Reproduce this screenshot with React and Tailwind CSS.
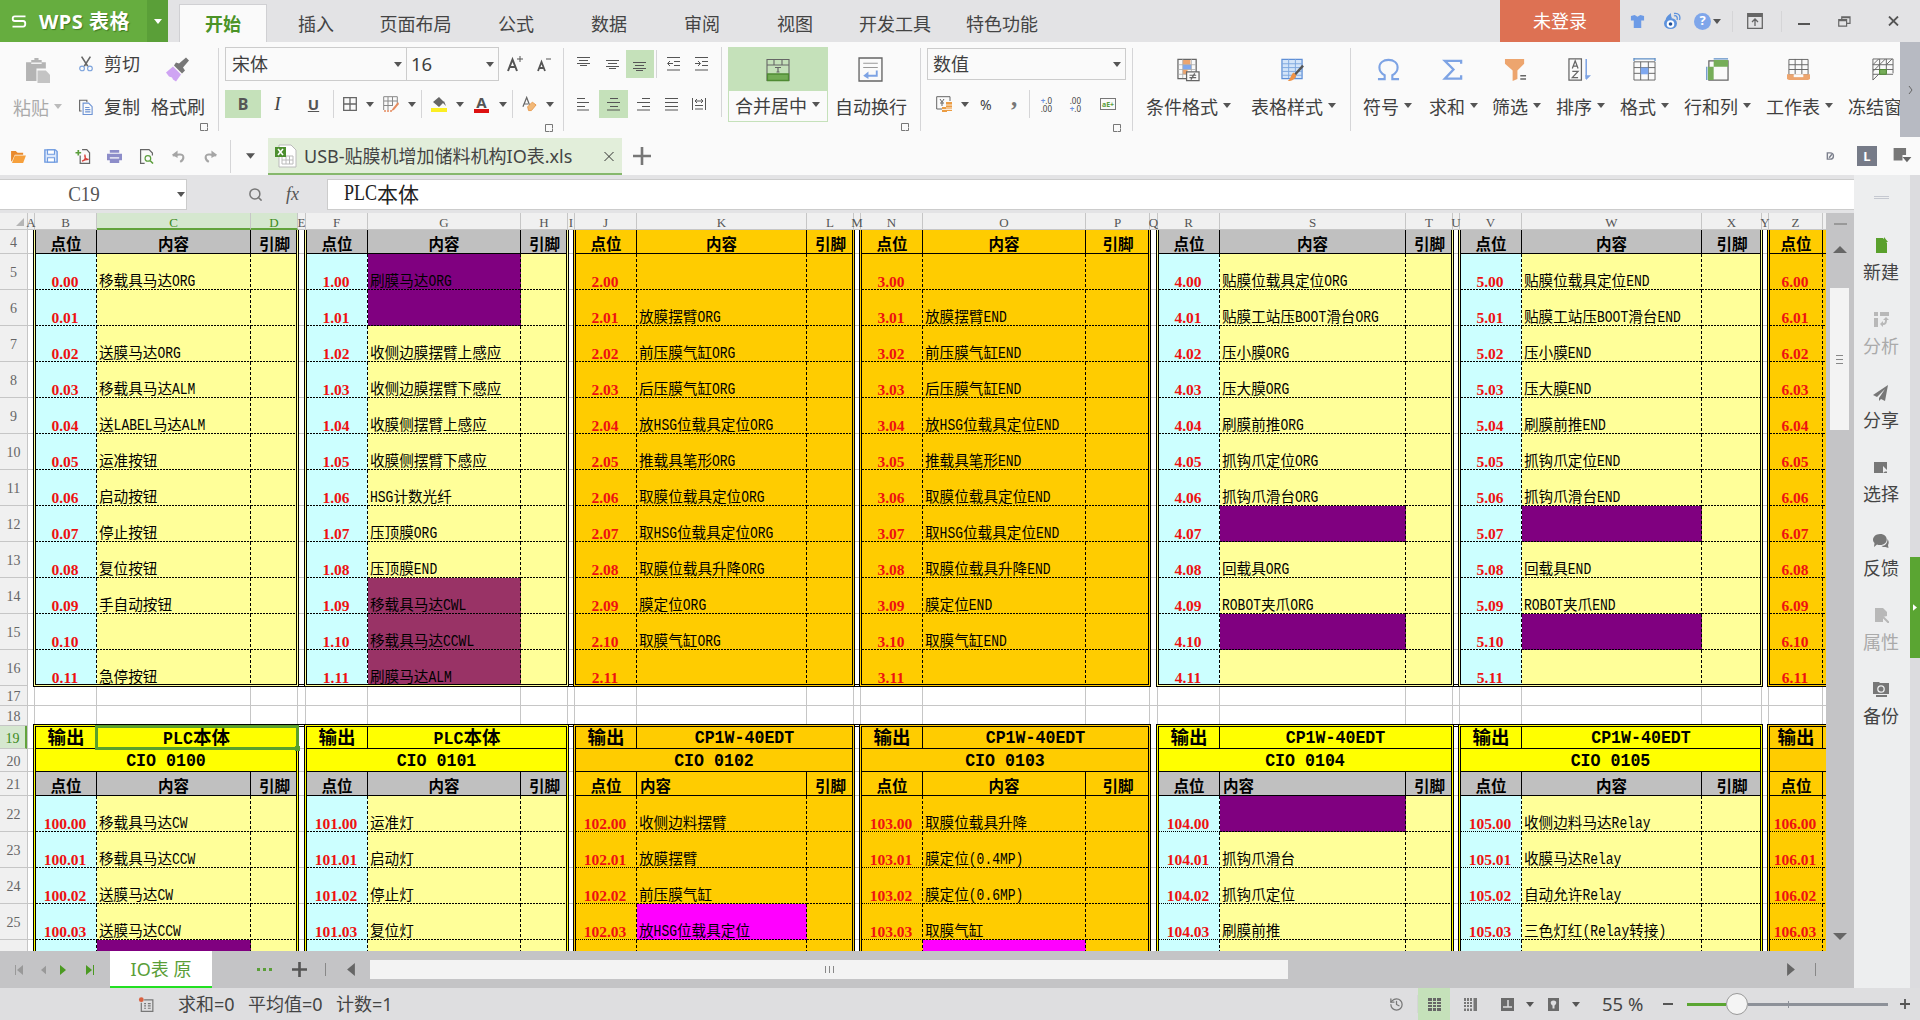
import React from "react";
import { History, Search } from "lucide-react";

const UI = "font-['Noto_Sans','Noto_Sans_CJK_SC',sans-serif]";
const SONG = "font-['Liberation_Serif','Noto_Sans_CJK_SC',serif]";

/* ---------- sheet data ---------- */

const DASH =
  "bg-no-repeat [background-image:repeating-linear-gradient(90deg,#000_0_2px,transparent_2px_3px),repeating-linear-gradient(180deg,#000_0_3px,transparent_3px_5px)] [background-size:100%_1px,1px_100%] [background-position:left_bottom,right_top]";
const DASH_BOTTOM =
  "bg-no-repeat [background-image:repeating-linear-gradient(90deg,#000_0_2px,transparent_2px_3px)] [background-size:100%_1px] [background-position:left_bottom]";
const DASH_RIGHT =
  "bg-no-repeat [background-image:repeating-linear-gradient(180deg,#000_0_3px,transparent_3px_5px)] [background-size:1px_100%] [background-position:right_top]";
const HAIR =
  "bg-no-repeat [background-image:repeating-linear-gradient(90deg,#000_0_1px,transparent_1px_2px),repeating-linear-gradient(180deg,#000_0_3px,transparent_3px_5px)] [background-size:100%_1px,1px_100%] [background-position:left_bottom,right_top]";

const P = "bg-[#800080]";
const M = "bg-[#993366]";
const F = "bg-[#ff00ff]";

const YELLOW = { head: "bg-[#c0c0c0]", title: "bg-[#ffff00]", point: "bg-[#ccffff]", body: "bg-[#ffff99]" };
const ORANGE = { head: "bg-[#ffcc00]", title: "bg-[#ffcc00]", point: "bg-[#ffcc00]", body: "bg-[#ffcc00]" };

const TABLES = [
  {
    w: "w-[266px]", c1: "w-[61px]", c2: "w-[154px]", theme: YELLOW, gap: "w-[5px]", joined: true,
    device: "PLC本体", cio: "CIO 0100",
    input: ["移载具马达ORG", "", "送膜马达ORG", "移载具马达ALM", "送LABEL马达ALM", "运准按钮", "启动按钮", "停止按钮", "复位按钮", "手自动按钮", "", "急停按钮"],
    output: ["移载具马达CW", "移载具马达CCW", "送膜马达CW", "送膜马达CCW", ""],
    inFill: {}, outFill: { 4: P }, selected: true,
  },
  {
    w: "w-[265px]", c1: "w-[61px]", c2: "w-[153px]", theme: YELLOW, gap: "w-[4px]", joined: true,
    device: "PLC本体", cio: "CIO 0101",
    input: ["刷膜马达ORG", "", "收侧边膜摆臂上感应", "收侧边膜摆臂下感应", "收膜侧摆臂上感应", "收膜侧摆臂下感应", "HSG计数光纤", "压顶膜ORG", "压顶膜END", "移载具马达CWL", "移载具马达CCWL", "刷膜马达ALM"],
    output: ["运准灯", "启动灯", "停止灯", "复位灯", ""],
    inFill: { 0: P, 1: P, 9: M, 10: M, 11: M }, outFill: {},
  },
  {
    w: "w-[282px]", c1: "w-[61px]", c2: "w-[170px]", theme: ORANGE, gap: "w-[4px]", joined: true,
    device: "CP1W-40EDT", cio: "CIO 0102", leftHead: true, hair: true,
    input: ["", "放膜摆臂ORG", "前压膜气缸ORG", "后压膜气缸ORG", "放HSG位载具定位ORG", "推载具笔形ORG", "取膜位载具定位ORG", "取HSG位载具定位ORG", "取膜位载具升降ORG", "膜定位ORG", "取膜气缸ORG", ""],
    output: ["收侧边料摆臂", "放膜摆臂", "前压膜气缸", "放HSG位载具定位", ""],
    inFill: {}, outFill: { 3: F },
  },
  {
    w: "w-[292px]", c1: "w-[61px]", c2: "w-[163px]", theme: ORANGE, gap: "w-[5px]", joined: false,
    device: "CP1W-40EDT", cio: "CIO 0103", hair: true,
    input: ["", "放膜摆臂END", "前压膜气缸END", "后压膜气缸END", "放HSG位载具定位END", "推载具笔形END", "取膜位载具定位END", "取HSG位载具定位END", "取膜位载具升降END", "膜定位END", "取膜气缸END", ""],
    output: ["取膜位载具升降", "膜定位(0.4MP)", "膜定位(0.6MP)", "取膜气缸", ""],
    inFill: {}, outFill: { 4: F },
  },
  {
    w: "w-[298px]", c1: "w-[61px]", c2: "w-[186px]", theme: YELLOW, gap: "w-[4px]", joined: true,
    device: "CP1W-40EDT", cio: "CIO 0104", leftHead: true, hair: true,
    input: ["贴膜位载具定位ORG", "贴膜工站压BOOT滑台ORG", "压小膜ORG", "压大膜ORG", "刷膜前推ORG", "抓钩爪定位ORG", "抓钩爪滑台ORG", "", "回载具ORG", "ROBOT夹爪ORG", "", ""],
    output: ["", "抓钩爪滑台", "抓钩爪定位", "刷膜前推", ""],
    inFill: { 7: P, 10: P }, outFill: { 0: P },
  },
  {
    w: "w-[305px]", c1: "w-[61px]", c2: "w-[180px]", theme: YELLOW, gap: "w-[4px]", joined: false,
    device: "CP1W-40EDT", cio: "CIO 0105", hair: true,
    input: ["贴膜位载具定位END", "贴膜工站压BOOT滑台END", "压小膜END", "压大膜END", "刷膜前推END", "抓钩爪定位END", "抓钩爪滑台END", "", "回载具END", "ROBOT夹爪END", "", ""],
    output: ["收侧边料马达Relay", "收膜马达Relay", "自动允许Relay", "三色灯红(Relay转接)", ""],
    inFill: { 7: P, 10: P }, outFill: {},
  },
  {
    w: "w-[200px]", c1: "w-[53px]", c2: "w-[100px]", theme: ORANGE, gap: "w-0", joined: true,
    device: "", cio: "", cropped: true, hair: true,
    input: ["", "", "", "", "", "", "", "", "", "", "", ""],
    output: ["", "", "", "", ""],
    inFill: {}, outFill: {},
  },
];

const COLS = [
  ["A", "w-[7px]"], ["B", "w-[62px]"], ["C", "w-[154px]"], ["D", "w-[47px]"], ["E", "w-[8px]"],
  ["F", "w-[62px]"], ["G", "w-[153px]"], ["H", "w-[47px]"], ["I", "w-[7px]"], ["J", "w-[62px]"],
  ["K", "w-[170px]"], ["L", "w-[47px]"], ["M", "w-[7px]"], ["N", "w-[62px]"], ["O", "w-[163px]"],
  ["P", "w-[64px]"], ["Q", "w-[8px]"], ["R", "w-[62px]"], ["S", "w-[186px]"], ["T", "w-[47px]"],
  ["U", "w-[7px]"], ["V", "w-[62px]"], ["W", "w-[180px]"], ["X", "w-[60px]"], ["Y", "w-[7px]"], ["Z", "w-[54px]"],
];

const ROWS = [
  [4, "h-6"],
  ...[5, 6, 7, 8, 9, 10, 11, 12, 13, 14, 15, 16].map((n) => [n, "h-9"]),
  [17, "h-5"], [18, "h-5"], [19, "h-[23px]"], [20, "h-[23px]"], [21, "h-6"],
  [22, "h-9"], [23, "h-9"], [24, "h-9"], [25, "h-9"],
];

/* ---------- small pieces ---------- */

function Caret({ className = "" }) {
  return (
    <svg viewBox="0 0 8 5" className={`h-[5px] w-[8px] shrink-0 text-[#555] ${className}`}>
      <path d="M0 0h8L4 5z" fill="currentColor" />
    </svg>
  );
}

function Sep({ className = "" }) {
  return <div className={`w-px shrink-0 bg-[#d5d5d7] ${className}`} />;
}

function Launcher({ className = "" }) {
  return (
    <svg viewBox="0 0 8 8" className={`h-2 w-2 shrink-0 ${className}`} fill="none" stroke="#777">
      <path d="M7.5 4V.5h-7v7H4M4.5 7.5h3v-3" />
    </svg>
  );
}

function Svg({ className = "", box = "0 0 24 24", children }) {
  return (
    <svg viewBox={box} fill="none" stroke="#666" strokeWidth="1.3" className={`shrink-0 ${className}`}>
      {children}
    </svg>
  );
}

function Lines({ d, className = "" }) {
  return (
    <svg viewBox="0 0 14 14" className={`h-[14px] w-[14px] shrink-0 ${className}`} fill="none" stroke="#555" strokeWidth="1">
      <path d={d} />
    </svg>
  );
}

// half-width runs are set in a tall, narrow face next to the full-width glyphs
function Mixed({ text, latin }) {
  return text.split(/([\x20-\x7e]+)/).map((part, i) =>
    i % 2 ? (
      <span key={i} className={`inline-block origin-[50%_78%] ${latin}`}>{part}</span>
    ) : (
      <span key={i}>{part}</span>
    )
  );
}

/* ---------- title bar ---------- */

const TABS = [
  ["插入", "w-[98px]"], ["页面布局", "w-[101px]"], ["公式", "w-[100px]"], ["数据", "w-[86px]"],
  ["审阅", "w-[100px]"], ["视图", "w-[86px]"], ["开发工具", "w-[114px]"], ["特色功能", "w-[100px]"],
];

function TitleBar() {
  return (
    <div className="flex h-[42px] bg-[#e3e3e5] text-[18px] text-[#444]">
      <div className="flex w-[147px] items-center bg-[#66ad3f] text-white">
        <Svg box="0 0 16 14" className="ml-[11px] h-[13px] w-4">
          <path d="M15 1.5H3.500c-3 0-3 5 0 5h9c3 0 3 6 0 6H1" stroke="#fff" strokeWidth="2" />
        </Svg>
        <span className="ml-3 mt-px whitespace-nowrap text-[20px] font-bold tracking-[0.5px] [text-shadow:1px_1px_1px_#3f7a22]">WPS 表格</span>
      </div>
      <div className="flex w-[21px] items-center justify-center bg-[#5a9f38]">
        <Caret className="text-white" />
      </div>
      <div className="ml-[11px] mt-1 flex w-[88px] items-center justify-center border border-b-0 border-[#d0d0d3] bg-[#fafafa] pt-px font-bold text-[#4b9327]">
        开始
      </div>
      {TABS.map(([t, w]) => (
        <div key={t} className={`flex items-center justify-center pt-[7px] ${w}`}>{t}</div>
      ))}
      <div className="ml-auto flex w-[120px] items-center justify-center bg-[#dd7153] pt-px text-white">未登录</div>
      <div className="flex w-[300px] items-center">
        <Svg box="0 0 16 16" className="ml-[10px] h-[15px] w-[15px]">
          <path d="M1 2l4-1 3 2 3-2 4 1v5h-3v8H4V7H1z" fill="#6d9be6" stroke="none" />
        </Svg>
        <Svg box="0 0 18 18" className="ml-[18px] h-[18px] w-[18px]">
          <ellipse cx="7.500" cy="11.500" rx="6.500" ry="5.500" fill="#5d92dd" stroke="none" />
          <path d="M3 9C2 5 6 3 8 1c0 2 0 4 1 5" fill="#5d92dd" stroke="none" />
          <circle cx="7.500" cy="12" r="3.800" fill="#fff" stroke="none" />
          <circle cx="7.500" cy="12" r="1.800" fill="#1f4f99" stroke="none" />
          <path d="M11 4c2-1 4 1 3 4M11 1.500c4-1 7 2 5.500 6.500" stroke="#5d92dd" />
        </Svg>
        <div className="ml-[13px] flex h-[17px] w-[17px] items-center justify-center rounded-full bg-[#7fa6ea] text-[13px] font-bold text-white">?</div>
        <Caret className="ml-[2px]" />
        <Sep className="ml-[11px] h-[21px] bg-[#a5a5a8]" />
        <Svg box="0 0 16 16" className="ml-[14px] h-4 w-4">
          <path d="M.7.700h14.600v14.600H.700zM1 3h14M8 13V6M5 9l3-3 3 3" />
          <path d="M1 1h14v3H1z" fill="#666" stroke="none" />
        </Svg>
        <Sep className="ml-[18px] h-[21px] bg-[#a5a5a8]" />
        <div className="ml-4 mt-[5px] h-[2px] w-3 bg-[#555]" />
        <Svg box="0 0 14 12" className="ml-[28px] h-[11px] w-[13px]">
          <path d="M.7 4h8.600v7H.700zM.7 5.200h8.600M4 4V1h9v7H9.500M4 1.700h9" />
        </Svg>
        <Svg box="0 0 10 10" className="ml-[37px] h-[10px] w-[11px]">
          <path d="M.5.500l9 9M9.500.500l-9 9" stroke="#555" strokeWidth="1.800" />
        </Svg>
      </div>
    </div>
  );
}

/* ---------- ribbon ---------- */

function Clipboard() {
  return (
    <>
      <div className="flex w-[66px] flex-col">
        <Svg className="ml-[25px] mt-[16px] h-[25px] w-[25px]">
          <path d="M1 4h5V2h3V0h4v2h3v2h4v6h-9v12H1z" fill="#b4b4b4" stroke="none" />
          <path d="M12 12h8l4 4v8H12z" fill="#c4c4c4" stroke="none" />
          <path d="M6 5h10" stroke="#fafafa" />
        </Svg>
        <div className="ml-[13px] mt-[12px] flex items-center whitespace-nowrap leading-[26px] text-[#aaa]">
          粘贴<Caret className="mb-1 ml-[5px] text-[#bbb]" />
        </div>
      </div>
      <div className="flex w-[85px] flex-col pl-[13px]">
        <div className="mt-[9px] flex items-center leading-[26px]">
          <Svg box="0 0 16 18" className="h-[17px] w-[14px]">
            <path d="M3 0l7 11M13 0L6 11" stroke="#666" strokeWidth="1.800" />
            <circle cx="3.500" cy="13.500" r="2.700" stroke="#7da3dc" />
            <circle cx="12.500" cy="13.500" r="2.700" stroke="#7da3dc" />
          </Svg>
          <span className="ml-[11px]">剪切</span>
        </div>
        <div className="mt-[17px] flex items-center leading-[26px]">
          <Svg box="0 0 16 18" className="h-[17px] w-[14px]">
            <path d="M3 13H.700V.700H9V3" />
            <path d="M4.700 4H11l4 4v9H4.700zM7 9h5M7 11.500h6M7 14h6" stroke="#6d93d4" />
          </Svg>
          <span className="ml-[11px]">复制</span>
        </div>
      </div>
      <div className="flex w-[67px] flex-col">
        <Svg className="ml-[15px] mt-[15px] h-[25px] w-[24px]">
          <path d="M8 8l8 8 3-3-2-3 6-7-3-3-7 6-3-1z" fill="#777" stroke="none" />
          <path d="M7 9l8 8-5 7-3-2-1-2-3-1-3-4z" fill="#cfa4f3" stroke="none" />
        </Svg>
        <span className="mt-[12px] leading-[26px]">格式刷</span>
        <Launcher className="ml-[49px] mt-[3px]" />
      </div>
    </>
  );
}

function FontGroup() {
  return (
    <div className="ml-[6px] flex w-[338px] flex-col">
      <div className="mt-[5px] flex h-[34px] items-center">
        <div className="flex h-[34px] w-[182px] items-center justify-between border border-[#ccc] pl-[6px] pr-1">
          宋体<Caret />
        </div>
        <div className="-ml-px flex h-[34px] w-[93px] items-center justify-between border border-[#ccc] pl-[4px] pr-1">
          <span className="text-[18.500px]">16</span><Caret />
        </div>
        <Svg box="0 0 16 18" className="ml-[8px] h-[18px] w-4">
          <path d="M1 16L5.500 4.500 10 16M2.800 12h5.500" stroke="#555" strokeWidth="2" />
          <path d="M13 1v6M10 4h6" stroke="#555" strokeWidth="1" />
        </Svg>
        <Svg box="0 0 16 18" className="ml-[14px] h-[18px] w-4">
          <path d="M1 16L4.500 7 8 16M2.300 13h4.500" stroke="#555" strokeWidth="1.800" />
          <path d="M9 4h5" stroke="#555" strokeWidth="1" />
        </Svg>
      </div>
      <div className="mt-[9px] flex h-7 items-center">
        <div className="flex h-7 w-9 items-center justify-center bg-[#c5e1ba] text-[16px] font-bold text-[#555]">B</div>
        <div className="w-[33px] text-center font-['Liberation_Serif'] text-[19px] italic text-[#444]">I</div>
        <div className="w-[39px] text-center text-[15px] font-bold text-[#555] underline">U</div>
        <Sep className="h-7" />
        <Svg box="0 0 14 14" className="ml-[9px] h-[14px] w-[14px]"><path d="M.7.700h12.600v12.600H.700zM7 1v12M1 7h12" /></Svg>
        <Caret className="ml-[9px]" />
        <Svg box="0 0 16 16" className="ml-[9px] h-[16px] w-[16px]">
          <path d="M.7 14V.700h13.600V9M5 1v13M9.500 1v9M1 5h13M1 9.500h9" strokeWidth="1" stroke="#888" />
          <path d="M1 15h9" stroke="#e58b5f" strokeDasharray="2 1" />
          <path d="M15 6l-5 6-2 3 3-1 5-6z" fill="#e58b5f" stroke="none" />
        </Svg>
        <Caret className="ml-[9px]" />
        <Sep className="ml-[5px] h-7" />
        <Svg box="0 0 16 16" className="ml-[9px] h-4 w-4">
          <path d="M2 6l6-5 5 5-5 5zM13 5l2 5-3-3z" fill="#666" stroke="none" />
          <path d="M0 12h16v4H0z" fill="#fbee23" stroke="none" />
        </Svg>
        <Caret className="ml-[9px]" />
        <div className="ml-[10px] flex h-[17px] w-[15px] flex-col items-center">
          <span className="text-[15px] font-bold leading-[13px] text-[#555]">A</span>
          <div className="h-1 w-full bg-[#dd1111]" />
        </div>
        <Caret className="ml-[10px]" />
        <Sep className="ml-[5px] h-7" />
        <Svg box="0 0 16 16" className="ml-[9px] h-4 w-[15px]">
          <path d="M1 11L5 1l3 8M2.500 8h4" />
          <path d="M6 11l5-5 4 3-5 6H7z" fill="#f2b877" stroke="#e89a4d" strokeWidth="1" />
        </Svg>
        <Caret className="ml-[9px]" />
      </div>
      <Launcher className="ml-[320px] mt-[6px]" />
    </div>
  );
}

function AlignGroup() {
  return (
    <>
      <div className="flex w-[157px] flex-col">
        <div className="mt-2 flex h-7 items-center">
          <Lines className="ml-[13px]" d="M0 .5h13M2 3.500h9M0 6.500h13M3 8.500h7" />
          <Lines className="ml-[15px]" d="M0 3.500h13M2 6.500h9M0 9.500h13M3 11.500h7" />
          <div className="ml-[6px] flex h-7 w-7 items-center justify-center bg-[#c5e1ba]">
            <Lines d="M0 5.500h13M2 8.500h9M0 11.500h13M3 13.500h7" />
          </div>
          <Sep className="ml-[2px] h-7" />
          <Lines className="ml-[10px]" d="M0 .5h13M7 4.500h6M7 8.500h6M0 13h13M6 6.500H1M3 4L.5 6.500 3 9" />
          <Lines className="ml-[14px]" d="M0 .5h13M7 4.500h6M7 8.500h6M0 13h13M0 6.500h5M3 4l2.500 2.500L3 9" />
        </div>
        <div className="mt-3 flex h-7 items-center">
          <Lines className="ml-[13px]" d="M0 1.500h8M0 5.500h12M0 9.500h8M0 13h12" />
          <div className="ml-[8px] flex h-7 w-[29px] items-center justify-center bg-[#c5e1ba]">
            <Lines d="M3 1.500h8M0 5.500h13M3 9.500h8M0 13h13" />
          </div>
          <Lines className="ml-[9px]" d="M5 1.500h8M0 5.500h13M5 9.500h8M0 13h13" />
          <Lines className="ml-[14px]" d="M0 1.500h13M0 5.500h13M0 9.500h13M0 13h13" />
          <Lines className="ml-[13px]" d="M.5 1v12M13.500 1v12M3 4h8M5 2L3 4l2 2M9 2l2 2-2 2M3 8.500h8M3 12h8" />
        </div>
      </div>
      <Sep className="mt-[5px] h-[70px]" />
      <div className="ml-[6px] mt-[5px] flex h-[75px] w-[100px] flex-col border border-[#c5e1ba]">
        <div className="flex h-[43px] items-center justify-center bg-[#c5e1ba]">
          <Svg className="h-[24px] w-[24px]">
            <path d="M1 1.500h22v21H1zM1 7h22M8 1v6M16 1v6" strokeWidth="1.100" />
            <path d="M1.500 16h21v6.500h-21z" fill="#72ac54" stroke="#4f8a33" />
            <path d="M9 9.500h6M12 9.500V14M10.500 14h3" strokeWidth="1.200" />
          </Svg>
        </div>
        <div className="flex flex-1 items-center whitespace-nowrap pl-[6px] pt-px">
          合并居中<Caret className="mb-1 ml-[5px]" />
        </div>
      </div>
      <div className="ml-[7px] flex w-[85px] flex-col">
        <Svg className="ml-[23px] mt-[15px] h-[25px] w-[25px]">
          <path d="M1 1h22v22H1z" />
          <path d="M5 6h14M5 10h14" stroke="#999" strokeWidth="1" />
          <path d="M18 13v5H8" stroke="#7da3e4" strokeWidth="1.800" />
          <path d="M5 18l5-4v7z" fill="#7da3e4" stroke="none" />
        </Svg>
        <span className="mt-[12px] leading-[26px]">自动换行</span>
        <Launcher className="ml-[66px] mt-[3px]" />
      </div>
    </>
  );
}

function NumberGroup() {
  return (
    <div className="ml-[6px] flex w-[205px] flex-col">
      <div className="mt-[6px] flex h-[32px] w-[199px] items-center justify-between border border-[#ccc] pl-[5px] pr-1">
        数值<Caret />
      </div>
      <div className="mt-[10px] flex h-7 items-center">
        <Svg box="0 0 16 16" className="ml-[9px] h-4 w-4">
          <path d="M14 5V.700H.700V13H7M4 3l2 3 2-3M6 6v4M4 7h4" strokeWidth="1" />
          <path d="M10 6h6v9h-6zM6 11h5v5H6z" fill="#eb9c43" stroke="none" />
          <path d="M10 9h6M6 13.500h10M10 12h6" stroke="#fff" strokeWidth=".8" />
        </Svg>
        <Caret className="ml-[9px]" />
        <span className="ml-[11px] w-[14px] text-[14px]">%</span>
        <span className="ml-[17px] mt-[-12px] w-[6px] font-['Liberation_Serif'] text-[25px] font-bold leading-4 text-[#777]">,</span>
        <Sep className="ml-[12px] h-7" />
        <div className="ml-[7px] flex w-[15px] flex-col items-end gap-px text-[8px] leading-[7px]">
          <span><b className="text-[#6d93e0]">+</b>.0</span><span>.00</span>
        </div>
        <div className="ml-[14px] flex w-[15px] flex-col items-end gap-px text-[8px] leading-[7px]">
          <span>.00</span><span><b className="text-[#6d93e0]">+</b>.0</span>
        </div>
        <div className="ml-[19px] flex h-[12px] w-4 items-center justify-center border border-[#777] text-[7px] font-bold leading-none text-[#5b9e3c]">aE+</div>
      </div>
      <Launcher className="ml-[186px] mt-[6px]" />
    </div>
  );
}

function BigButton({ label, w, icon, noCaret, children }) {
  return (
    <div className={`flex shrink-0 flex-col ${w}`}>
      <Svg className={`mt-[15px] h-[25px] w-[23px] ${icon}`}>{children}</Svg>
      <div className="mt-[12px] flex items-center whitespace-nowrap leading-[26px]">
        {label}
        {!noCaret && <Caret className="mb-1 ml-[5px]" />}
      </div>
    </div>
  );
}

function Ribbon() {
  return (
    <div className="flex h-[95px] bg-[#fafafa] text-[18px] text-[#3f3f3f]">
      <Clipboard />
      <Sep className="mt-[6px] h-[83px]" />
      <FontGroup />
      <Sep className="mt-[6px] h-[83px]" />
      <AlignGroup />
      <Sep className="mt-[6px] h-[83px]" />
      <NumberGroup />
      <Sep className="mt-[6px] h-[83px]" />
      <div className="ml-[13px] flex min-w-0 flex-1 overflow-hidden">
        <BigButton label="条件格式" w="w-[105px]" icon="ml-[31px]">
          <path d="M1 1.500h19v20H1z" />
          <path d="M6 2h8v5H6zM6 12h5v5H6z" fill="#eda56e" stroke="none" />
          <path d="M6 7h9v5H6z" fill="#7fa8ef" stroke="none" />
          <path d="M1 7h19M1 12h19M1 17h19M6 1v20M15 1v13" stroke="#aaa" strokeWidth=".8" />
          <path d="M10 14.500h13v9H10z" fill="#fafafa" />
          <path d="M13 18h7M13 20.500h7M18.500 16l-4 6.500" />
        </BigButton>
        <BigButton label="表格样式" w="w-[99px]" icon="ml-[30px]">
          <path d="M1 1.500h21v20H1z" fill="#d3e4f9" stroke="#5f8fd6" />
          <path d="M1 6h21M1 10h21M1 14h21M1 18h21M8 1v20M15 1v20" stroke="#7da7df" strokeWidth="1" />
          <path d="M23 8l-9 10" stroke="#555" strokeWidth="2.500" />
          <path d="M13 15l3 3c-1 4-4 6-9 6 3-2 3-6 6-9z" fill="#ee9246" stroke="none" />
        </BigButton>
        <Sep className="mt-[6px] h-[83px]" />
        <BigButton label="符号" w="ml-[12px] w-[66px]" icon="ml-[14px]">
          <path d="M1 22h7v-4C4 16 2.500 13 2.500 10c0-5 4-8 9.500-8s9.500 3 9.500 8c0 3-1.500 6-5.500 8v4h7" stroke="#7da3e4" strokeWidth="2.200" />
        </BigButton>
        <BigButton label="求和" w="w-[63px]" icon="ml-[12px]">
          <path d="M21 6V3H4l9 9-9 9.500h17v-3.500" stroke="#7da3e4" strokeWidth="2.400" />
        </BigButton>
        <BigButton label="筛选" w="w-[64px]" icon="ml-[12px]">
          <path d="M1 1h20v5l-7 7v9l-5 2V13L1 6z" fill="#eda56e" stroke="none" />
          <path d="M17 18.500h6M17 22h6" strokeWidth="1.600" />
        </BigButton>
        <BigButton label="排序" w="w-[64px]" icon="ml-[12px]">
          <path d="M1 1h13v22H1z" />
          <path d="M4.500 11L7.500 3l3 8M5.500 8.500h4M4.500 14h6l-6 6.500h6" strokeWidth="1.300" />
          <path d="M19 1v21" stroke="#7da3e4" strokeWidth="1.600" />
          <path d="M18 18h6l-5 5z" fill="#7da3e4" stroke="none" />
        </BigButton>
        <BigButton label="格式" w="w-[64px]" icon="ml-[13px]">
          <path d="M1 4h22v19H1zM8 4v19M16 4v19M1 10h22M1 16h22" strokeWidth="1" />
          <path d="M8 10h8v7H8z" fill="#7fa8ef" stroke="none" />
          <path d="M1 1h22M1 0v3M23 0v3" stroke="#5f8fc6" />
        </BigButton>
        <BigButton label="行和列" w="w-[82px]" icon="ml-[22px]">
          <path d="M3 3h20v20H3z" />
          <path d="M8 2h15v7H8zM2 9h6v14H2z" fill="#76ad59" stroke="none" />
          <path d="M8 .8h15M.8 9v14" stroke="#5f8fc6" />
        </BigButton>
        <BigButton label="工作表" w="w-[82px]" icon="ml-[21px]">
          <path d="M2 1.500h20v16H2zM8.500 1v16M15.500 1v16M2 7h20M2 12h20" strokeWidth="1" />
          <path d="M0 17h24v5l-2 1H2l-2-1z" fill="#eda56e" stroke="none" />
          <path d="M7 17v3h10v-3" fill="#fafafa" stroke="none" />
        </BigButton>
        <BigButton label="冻结窗" w="w-[60px]" icon="ml-[23px]" noCaret>
          <path d="M2 23V1h21v15M9 1v16M16 1v15M2 7h21M2 12h21M2 17h21M2 7l6-6M9 7l6-6M16 7l6-6M2 23l6-6M2 14l7-7" strokeWidth="1" />
          <path d="M9 12h7v5H9z" fill="#76ad59" stroke="#4f8a33" strokeWidth="1" />
        </BigButton>
      </div>
      <div className="flex w-5 items-center justify-center bg-[#b7bac2]">
        <Svg box="0 0 5 8" className="h-2 w-[5px]"><path d="M1 0l3 4-3 4" strokeWidth="1" /></Svg>
      </div>
    </div>
  );
}

/* ---------- document tabs + formula bar ---------- */

function DocBar() {
  return (
    <div className="flex h-[38px] items-center bg-[#fafafa]">
      <Svg box="0 0 16 14" className="ml-[11px] h-[13px] w-[15px]">
        <path d="M0 1h5l2 2h6v2H4L1 12H0z" fill="#e98a2d" stroke="none" />
        <path d="M4 6h12l-3 8H1z" fill="#f6a03c" stroke="none" />
      </Svg>
      <Svg box="0 0 16 16" className="ml-[18px] h-[14px] w-[14px]">
        <path d="M1 1h12l2 2v12H1z" fill="#dce8fb" stroke="#6f9be0" strokeWidth="1.600" />
        <path d="M4 1h8v5H4zM4 10h8v5H4z" fill="#fff" stroke="#6f9be0" />
      </Svg>
      <Svg box="0 0 16 16" className="ml-[17px] h-[15px] w-4">
        <path d="M5 7v8.300h10V4l-3-3.300H7" />
        <path d="M7 13c3-1 4-4 3-7-.500 3 1 5 4 5-3 0-5 .500-7 2z" stroke="#d8423b" />
        <path d="M0 4h6M3 1v6" stroke="#5b9e3c" strokeWidth="1.800" />
      </Svg>
      <Svg box="0 0 16 16" className="ml-4 h-[15px] w-[15px]">
        <path d="M3 1h10v3H3zM0 5h16v7H0zM3 10h10v5H3z" fill="#8d8dc9" stroke="none" />
        <path d="M3 9.500h10" stroke="#fff" />
      </Svg>
      <Svg box="0 0 16 16" className="ml-[17px] h-[15px] w-[15px]">
        <path d="M6 15.300H1.700V.700h9l3.600 3.600V7" />
        <circle cx="9.500" cy="10" r="3" stroke="#5b9e3c" />
        <path d="M12 12.500l3 3" stroke="#5b9e3c" strokeWidth="1.600" />
      </Svg>
      <Svg box="0 0 14 14" className="ml-[18px] h-[13px] w-[13px]">
        <path d="M1 5h7c6 0 5 6 0 8" stroke="#a5a5a5" strokeWidth="2.200" transform="rotate(-8 7 7)" />
        <path d="M0 5l6-4.500v8z" fill="#a5a5a5" stroke="none" />
      </Svg>
      <Svg box="0 0 14 14" className="ml-[19px] h-[13px] w-[13px]">
        <path d="M13 5H6c-6 0-5 6 0 8" stroke="#a5a5a5" strokeWidth="2.200" transform="rotate(8 7 7)" />
        <path d="M14 5L8 .500v8z" fill="#a5a5a5" stroke="none" />
      </Svg>
      <Sep className="ml-[13px] h-[33px]" />
      <Caret className="ml-[15px] h-[6px] w-[9px]" />
      <div className="ml-[13px] mt-px flex h-[37px] w-[354px] items-center border-b-2 border-[#86b86c] bg-[#e2eeda]">
        <Svg box="0 0 22 24" className="ml-[7px] h-[24px] w-[22px]">
          <path d="M4 1h12l5 5v17H4z" fill="#fff" stroke="#bbb" strokeWidth="1" />
          <path d="M7 12h11v8H7zM7 16h11M11 12v8M14.500 12v8" stroke="#bbb" strokeWidth="1" />
          <path d="M0 3h11v10H0z" fill="#4d8f2f" stroke="none" />
          <path d="M3 5l5 6M8 5l-5 6" stroke="#fff" strokeWidth="1.600" />
        </Svg>
        <span className="ml-[7px] mt-[2px] w-[292px] whitespace-nowrap text-[18px] text-[#444]">USB-贴膜机增加储料机构IO表.xls</span>
        <Svg box="0 0 10 10" className="ml-[8px] mt-px h-[11px] w-[10px]"><path d="M.5.500l9 9M9.500.500l-9 9" stroke="#333" strokeWidth="1" /></Svg>
      </div>
      <Svg box="0 0 18 18" className="ml-[11px] h-[18px] w-[18px]"><path d="M9 0v18M0 9h18" stroke="#777" strokeWidth="2.600" /></Svg>
      <Svg box="0 0 10 10" className="ml-auto h-[10px] w-[9px]"><path d="M1.500 1.500h3c5 0 5 7 0 7h-3zM3.500 7l3-4" stroke="#7b7f8c" strokeWidth="1.600" /></Svg>
      <div className="ml-[22px] flex h-5 w-5 items-center justify-center bg-[#767b88] text-[13px] font-bold leading-none text-white">L</div>
      <Svg box="0 0 20 18" className="ml-4 mr-[8px] h-[16px] w-[19px]">
        <path d="M0 0h14v8h-4v6H0z" fill="#777" stroke="none" />
        <path d="M10 10h10l-5 6z" fill="#666" stroke="none" />
      </Svg>
    </div>
  );
}

function FormulaBar() {
  return (
    <div className={`flex h-[38px] bg-[#e3e3e5] pb-[3px] pt-1 text-[21px] ${SONG}`}>
      <div className="flex w-[187px] items-center border border-l-0 border-[#ccc] bg-white text-[#555]">
        <span className="w-[168px] pt-px text-center text-[19px]"><Mixed text="C19" latin="scale-y-110" /></span>
        <Caret className="ml-[9px] h-[4px] w-[6px]" />
      </div>
      <div className="flex w-[140px] items-center">
        <Search className="ml-[61px] h-[15px] w-[15px] text-[#777]" strokeWidth={2.400} />
        <span className="ml-[23px] text-[18px] italic text-[#555]">fx</span>
      </div>
      <div className="flex flex-1 items-center border-y border-l border-[#ccc] bg-white pl-[16px] pt-[2px] text-[#222]">
        <Mixed text="PLC本体" latin="scale-y-125 text-[18px]" />
      </div>
    </div>
  );
}

/* ---------- sheet ---------- */

function ColumnHeaders() {
  return (
    <div className={`flex h-[17px] overflow-hidden bg-[#f0f0f0] text-[13px] leading-[19px] text-[#555] ${SONG}`}>
      <div className="flex w-[28px] shrink-0 items-end justify-end border-b border-r border-[#c6c6c6] pb-[3px] pr-[3px]">
        <svg viewBox="0 0 8 8" className="h-2 w-2"><path d="M8 0v8H0z" fill="#b5b5b5" /></svg>
      </div>
      {COLS.map(([name, w]) => {
        const on = name === "C" || name === "D";
        return (
          <div
            key={name}
            className={`flex shrink-0 justify-center border-r border-[#c6c6c6] ${w} ${on ? "border-b-2 border-b-[#62a33c] bg-[#d5e7cf] text-[#3c8a1a]" : "border-b"}`}
          >
            {name}
          </div>
        );
      })}
      <div className="flex-1 border-b border-[#c6c6c6]" />
    </div>
  );
}

function RowHeaders() {
  return (
    <div className={`flex w-[28px] shrink-0 flex-col overflow-hidden border-r border-[#c6c6c6] bg-[#f0f0f0] text-[14px] leading-none text-[#666] ${SONG}`}>
      {ROWS.map(([n, h]) => (
        <div
          key={n}
          className={`flex shrink-0 items-center justify-center border-b border-[#c6c6c6] pt-[3px] ${h} ${n === 19 ? "border-r-2 border-r-[#62a33c] bg-[#d5e7cf] text-[#3c8a1a]" : ""}`}
        >
          {n}
        </div>
      ))}
    </div>
  );
}

function PointRow({ t, point, text, fill, last, hair, h = "h-9" }) {
  const drop = last ? "translate-y-[2px]" : "";
  return (
    <div className={`flex shrink-0 ${h}`}>
      <div className={`flex shrink-0 items-end justify-center pb-px pr-[3px] font-['Liberation_Serif'] text-[15.500px] font-bold leading-none text-[#ee1111] ${t.c1} ${t.theme.point} ${last ? DASH_RIGHT : hair ? HAIR : DASH}`}>
        <span className={drop}>{point}</span>
      </div>
      <div className={`flex shrink-0 items-end whitespace-nowrap pb-px pl-[2px] text-[14.600px] leading-none ${t.c2} ${fill || t.theme.body} ${last ? DASH_RIGHT : DASH}`}>
        <span className={drop}>
          <Mixed text={text} latin="scale-y-[1.2] font-['Liberation_Mono'] text-[13px] leading-none" />
        </span>
      </div>
      <div className={`flex-1 ${t.theme.body} ${last ? "" : DASH_BOTTOM}`} />
    </div>
  );
}

function HeadRow({ t, left }) {
  const cell = "flex items-end border-b border-black text-[15.500px] font-bold leading-[17px]";
  return (
    <div className={`flex h-6 shrink-0 ${t.theme.head}`}>
      <div className={`${cell} shrink-0 justify-center border-r ${t.c1}`}>点位</div>
      <div className={`${cell} shrink-0 border-r ${t.c2} ${left ? "pl-[3px]" : "justify-center"}`}>{t.cropped ? "" : "内容"}</div>
      <div className={`${cell} flex-1 justify-center pl-[2px]`}>{t.cropped ? "" : "引脚"}</div>
    </div>
  );
}

function InputTable({ t, index }) {
  return (
    <div className={`flex shrink-0 flex-col border-[3px] border-t-0 border-double border-black ${t.w} ${t.theme.body}`}>
      <HeadRow t={t} />
      {t.input.map((text, i) => (
        <PointRow
          key={i}
          t={t}
          point={`${index}.${String(i).padStart(2, "0")}`}
          text={text}
          fill={t.inFill[i]}
          last={i === 11}
          h={i === 11 ? "h-[34px]" : "h-9"}
        />
      ))}
    </div>
  );
}

function OutputTable({ t, index }) {
  const mono = "scale-y-[1.15] font-['Liberation_Mono'] text-[16.600px]";
  return (
    <div className={`flex shrink-0 flex-col border-[3px] border-b-0 border-double border-black ${t.w} ${t.theme.title}`}>
      <div className="flex h-[22px] shrink-0 text-[18.500px] font-bold leading-[23px]">
        <div className={`shrink-0 border-b border-r border-black text-center ${t.c1}`}>输出</div>
        <div className="relative flex flex-1 items-baseline justify-center border-b border-black">
          <Mixed text={t.device} latin={mono} />
          {t.selected && (
            <div className="absolute -bottom-[2px] -left-[2px] -right-[3px] -top-[2px] z-10 border-[3px] border-[#5aa02c]">
              <div className="absolute -bottom-[4px] -right-[4px] h-[5px] w-[5px] bg-[#5aa02c]" />
            </div>
          )}
        </div>
      </div>
      <div className="flex h-[23px] shrink-0 items-center justify-center whitespace-pre border-b border-black pt-[2px] font-bold leading-none">
        <span className={mono}>{t.cio}</span>
      </div>
      <HeadRow t={t} left={t.leftHead} />
      {t.output.map((text, i) => (
        <PointRow
          key={i}
          t={t}
          point={i < 4 ? `${100 + index}.0${i}` : ""}
          text={text}
          fill={t.outFill[i]}
          hair={t.hair}
        />
      ))}
    </div>
  );
}

// white strip between two neighbouring tables
function Gap({ w, rows, edge = "" }) {
  return (
    <div className={`flex shrink-0 flex-col bg-white ${w} ${edge}`}>
      {rows.map((h, i) => (
        <div key={i} className={`shrink-0 border-b border-[#c6c6c6] ${h}`} />
      ))}
    </div>
  );
}

const IN_ROWS = ["h-6", ...Array(11).fill("h-9")];
const OUT_ROWS = ["h-[22px]", "h-[23px]", "h-6", "h-9", "h-9", "h-9", "h-9"];

function Sheet() {
  return (
    <div className="flex min-h-0 flex-1 overflow-hidden">
      <RowHeaders />
      <div className={`flex min-w-0 flex-1 flex-col overflow-hidden bg-white text-black ${SONG}`}>
        <div className="flex h-[457px] shrink-0">
          <Gap w="w-[5px]" rows={IN_ROWS} />
          {TABLES.map((t, i) => (
            <React.Fragment key={i}>
              <InputTable t={t} index={i} />
              <Gap w={t.gap} rows={IN_ROWS} edge={t.joined ? "border-b-[3px] border-double border-b-black" : ""} />
            </React.Fragment>
          ))}
        </div>
        <div className="flex h-[37px] shrink-0">
          {COLS.map(([name, w]) => (
            <div key={name} className={`shrink-0 border-r border-[#c6c6c6] ${w}`}>
              <div className="h-[19px] border-b border-[#c6c6c6]" />
            </div>
          ))}
          <div className="h-[19px] flex-1 border-b border-[#c6c6c6]" />
        </div>
        <div className="flex h-[227px] shrink-0 overflow-hidden">
          <Gap w="w-[5px]" rows={["h-[25px]", ...OUT_ROWS.slice(1)]} />
          {TABLES.map((t, i) => (
            <React.Fragment key={i}>
              <OutputTable t={t} index={i} />
              {t.joined ? (
                <Gap w={t.gap} rows={OUT_ROWS} edge="border-t-[3px] border-double border-t-black" />
              ) : (
                <Gap w={t.gap} rows={["h-[25px]", ...OUT_ROWS.slice(1)]} />
              )}
            </React.Fragment>
          ))}
        </div>
      </div>
    </div>
  );
}

function VScroll() {
  return (
    <div className="flex w-[28px] flex-col items-center bg-[#c4c4c6]">
      <div className="mt-[10px] h-[2px] w-[13px] bg-[#999]" />
      <svg viewBox="0 0 14 7" className="mt-[21px] h-[7px] w-[14px]"><path d="M7 0l7 7H0z" fill="#666" /></svg>
      <div className="mr-px mt-[35px] flex h-[142px] w-[19px] flex-col items-center justify-center gap-[3px] bg-[#f3f3f3]">
        <div className="h-px w-[7px] bg-[#888]" />
        <div className="h-px w-[7px] bg-[#888]" />
        <div className="h-px w-[7px] bg-[#888]" />
      </div>
      <svg viewBox="0 0 14 7" className="mb-[11px] mt-auto h-[7px] w-[14px]"><path d="M0 0h14L7 7z" fill="#666" /></svg>
    </div>
  );
}

function Tri({ left, className = "h-[10px] w-[6px]" }) {
  return (
    <svg viewBox="0 0 6 10" className={`shrink-0 ${className}`}>
      <path d={left ? "M6 0v10L0 5z" : "M0 0v10l6-5z"} fill="currentColor" />
    </svg>
  );
}

function SheetTabs() {
  return (
    <div className="flex h-[37px] items-center bg-[#c4c4c6] text-[#5a9e38]">
      <div className="ml-[15px] h-[10px] w-px bg-[#999]" />
      <Tri left className="ml-px h-[10px] w-[6px] text-[#999]" />
      <Tri left className="ml-[18px] h-[10px] w-[5px] text-[#999]" />
      <Tri className="ml-[14px] h-[10px] w-[6px] text-[#4b9a22]" />
      <Tri className="ml-[20px] h-[10px] w-[6px] text-[#4b9a22]" />
      <div className="ml-px h-[10px] w-px bg-[#4b9a22]" />
      <div className="ml-[16px] flex h-[37px] w-[102px] items-center justify-center border-b-2 border-[#22e022] bg-white pt-[2px] text-[18px]">IO表 原</div>
      <div className="ml-[45px] flex gap-[3px]">
        <div className="h-[3px] w-[3px] bg-[#5a9e38]" />
        <div className="h-[3px] w-[3px] bg-[#5a9e38]" />
        <div className="h-[3px] w-[3px] bg-[#5a9e38]" />
      </div>
      <Svg box="0 0 16 16" className="ml-[20px] h-[15px] w-[15px]"><path d="M8 0v16M0 8h16" stroke="#555" strokeWidth="2.800" /></Svg>
      <div className="ml-[18px] h-[13px] w-px bg-[#888]" />
      <Tri left className="ml-[21px] h-[13px] w-[8px] text-[#666]" />
      <div className="ml-[15px] flex h-[19px] w-[918px] items-center justify-center gap-[3px] bg-[#f3f3f3]">
        <div className="h-[7px] w-px bg-[#888]" />
        <div className="h-[7px] w-px bg-[#888]" />
        <div className="h-[7px] w-px bg-[#888]" />
      </div>
      <Tri className="ml-auto mr-[20px] h-[13px] w-[8px] text-[#666]" />
      <div className="mr-[38px] h-[13px] w-px bg-[#888]" />
    </div>
  );
}

/* ---------- task pane ---------- */

const PANE = [
  ["新建", false, <path d="M3 1h7l4 5v10H3zM11 0l4 5h-4z" fill="#5aa02c" stroke="none" />],
  ["分析", true, <g stroke="none" fill="#b8b8b8"><path d="M1 1h4v4H1zM7 1h9v4H7zM1 7h4v9H1z" /><path d="M13 6l3 3h-2c0 3-1 5-4 5v2l-3-3 3-3v2c2 0 2-1 2-3h-2z" /></g>],
  ["分享", false, <path d="M15 0L0 10l4 2 8-8-6 9v3l2-2 4 2z" fill="#777" stroke="none" />],
  ["选择", false, <g stroke="none"><path d="M1 3h13v11H1z" fill="#777" /><path d="M10 7v7l2-1.500h3.500z" fill="#edeeef" /></g>],
  ["反馈", false, <g stroke="none" fill="#777"><path d="M7 1c9 0 9 11 0 11-1 0-2 0-3-.500L1 14l.5-4C-2 7 1 1 7 1z" /><path d="M14.500 6c2 3 1 5 .5 6l.5 3-3-1c-2 0-3 0-4-1 4 0 6-3 6-7z" /></g>],
  ["属性", true, <g><path d="M2 1h8l4 4v4l-4 1v5H2z" fill="#b8b8b8" stroke="none" /><path d="M10 10l6 6" stroke="#b8b8b8" strokeWidth="2" /></g>],
  ["备份", false, <g><path d="M0 1h6l1 1h9v11H0zM3 14h11v2H3z" fill="#777" stroke="none" /><circle cx="8" cy="8" r="3.200" stroke="#edeeef" /></g>],
];

function TaskPane() {
  return (
    <div className="flex w-[66px]">
      <div className="flex w-[56px] flex-col items-center bg-[#edeeef] pr-[2px] text-[18px]">
        <div className="mt-[21px] h-[3px] w-[15px] border-y border-[#c5c8d0]" />
        <div className="mt-[38px] flex flex-col">
          {PANE.map(([label, off, icon]) => (
            <div key={label} className={`flex h-[74px] flex-col items-center ${off ? "text-[#aaa]" : "text-[#444]"}`}>
              <Svg box="0 0 16 16" className="h-[16px] w-[16px]">{icon}</Svg>
              <span className="mt-[6px] leading-[26px]">{label}</span>
            </div>
          ))}
        </div>
      </div>
      <div className="w-[10px] bg-[#dcdcdf]">
        <div className="mt-[382px] flex h-[101px] items-center justify-center bg-[#5aa532]">
          <Tri className="h-[7px] w-[4px] text-white" />
        </div>
      </div>
    </div>
  );
}

/* ---------- status bar ---------- */

function StatusBar() {
  return (
    <div className="flex h-8 items-center bg-[#dedee0] text-[18px] text-[#444]">
      <Svg box="0 0 16 16" className="ml-[138px] h-[15px] w-4">
        <path d="M6 3h9.300v12.300H3V6M6 7h2M10 7h3M6 9.500h2M10 9.500h3M6 12h2M10 12h3" stroke="#777" />
        <circle cx="3" cy="2.800" r="2.600" fill="#d9603f" stroke="none" />
      </Svg>
      <span className="ml-[24px] w-[70px]">求和=0</span>
      <span className="w-[88px]">平均值=0</span>
      <span>计数=1</span>
      <History className="ml-auto h-[15px] w-[15px] text-[#777]" strokeWidth={2} />
      <Sep className="ml-[13px] h-[18px] bg-[#b0b0b0]" />
      <div className="flex h-8 w-8 items-center justify-center bg-[#c5e1ba]">
        <Svg box="0 0 13 13" className="h-[13px] w-[13px]">
          <path d="M0 0h13v13H0z" fill="#666" stroke="none" />
          <path d="M4.500 0v13M8.500 0v13M0 3.500h13M0 6.500h13M0 9.500h13" stroke="#c5e1ba" strokeWidth="1" />
        </Svg>
      </div>
      <Svg box="0 0 13 13" className="ml-[14px] h-[13px] w-[13px]">
        <path d="M0 0h8v9H0zM9.500 0H13v13H9.500zM0 10.500h8V13H0z" fill="#777" stroke="none" />
        <path d="M2.500 0v13M5.500 0v13M0 3.500h8M0 6.500h8" stroke="#dedee0" strokeWidth="1" />
      </Svg>
      <Svg box="0 0 13 13" className="ml-[24px] h-[13px] w-[13px]">
        <path d="M0 0h13v13H0z" fill="#6b6b6b" stroke="none" />
        <path d="M7 2v7M2 9h9" stroke="#dedee0" strokeWidth="1.500" />
      </Svg>
      <Caret className="ml-[12px]" />
      <Svg box="0 0 11 13" className="ml-[14px] h-[13px] w-[11px]">
        <path d="M0 0h11v13H0z" fill="#6b6b6b" stroke="none" />
        <path d="M5.500 2.500c4 0 3 4 1 5v3h-2v-3c-2-1-3-5 1-5z" fill="#dedee0" stroke="none" />
      </Svg>
      <Caret className="ml-[13px]" />
      <span className="ml-[22px] w-[61px] text-[18.500px]">55 %</span>
      <div className="h-[2px] w-[10px] bg-[#555]" />
      <div className="ml-[14px] flex w-[201px] items-center">
        <div className="h-[3px] w-[39px] bg-[#5aa532]" />
        <div className="h-[22px] w-[22px] rounded-full border border-[#999] bg-[#f4f4f4]" />
        <div className="h-[3px] w-10 bg-[#8d9199]" />
        <div className="h-[7px] w-px bg-[#8d9199]" />
        <div className="h-[3px] flex-1 bg-[#8d9199]" />
      </div>
      <Svg box="0 0 10 10" className="ml-[12px] mr-[10px] h-[10px] w-[10px]"><path d="M5 0v10M0 5h10" stroke="#555" strokeWidth="1.800" /></Svg>
    </div>
  );
}

export default function App() {
  return (
    <div className={`flex h-[1020px] w-[1920px] flex-col overflow-hidden ${UI}`}>
      <TitleBar />
      <Ribbon />
      <DocBar />
      <div className="flex min-h-0 flex-1">
        <div className="flex w-[1854px] flex-col">
          <FormulaBar />
          <div className="flex min-h-0 flex-1">
            <div className="flex w-[1826px] flex-col">
              <ColumnHeaders />
              <Sheet />
            </div>
            <VScroll />
          </div>
          <SheetTabs />
        </div>
        <TaskPane />
      </div>
      <StatusBar />
    </div>
  );
}
